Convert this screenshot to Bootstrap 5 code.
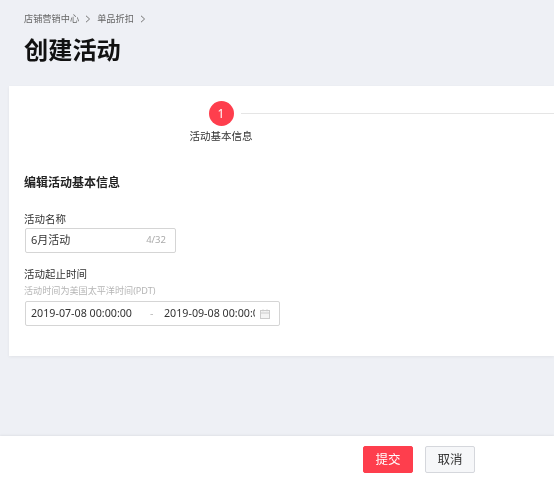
<!DOCTYPE html>
<html lang="zh">
<head>
<meta charset="utf-8">
<title>创建活动</title>
<link href="https://cdn.jsdelivr.net/npm/bootstrap@5.3.0/dist/css/bootstrap.min.css" rel="stylesheet">
<style>
html,body{height:477px;overflow:hidden;}
body{background:#eef0f5;font-family:"Noto Sans","Noto Sans CJK SC",sans-serif;color:#333;font-size:11px;filter:blur(.4px);}
.shell{height:477px;}
.crumbs{padding:4px 0 0 24px;height:33px;font-size:9.2px;line-height:14px;color:#666;gap:6px;}
.crumbs svg{width:6px;height:8px;}
.page-title{font-size:24.2px;font-weight:700;line-height:34px;margin:0 0 0 24px;color:#111;height:53px;}
.panel{margin-left:9px;height:270px;background:#fff;box-shadow:0 1px 3px rgba(0,0,0,.06);padding:15px 0 0 15px;}
.stepper{width:530px;height:42px;}
.step-col{width:68px;margin-left:163px;}
.step-dot{width:25px;height:25px;border-radius:50%;background:#fe3e4d;color:#fff;font-size:12px;line-height:25px;text-align:center;}
.step-name{font-size:10.5px;line-height:16px;margin-top:2px;color:#333;white-space:nowrap;}
.step-line{height:1px;flex:1;background:#e5e5e5;margin-top:12px;margin-left:-14px;}
.sec-title{font-size:12px;font-weight:700;line-height:17px;margin-top:31px;color:#222;}
.lbl{font-size:10.5px;line-height:16px;color:#333;}
.name-lbl{margin-top:20px;}
.field{height:25px;margin-left:1px;border:1px solid #d5d5d5;border-radius:2px;background:#fff;font-size:11px;color:#333;}
.name-field{width:151px;margin-top:1px;padding:0 9px 0 5px;}
.count{color:#aaa;font-size:9.5px;}
.time-lbl{margin-top:13px;}
.hint{font-size:9.1px;line-height:13px;color:#b5b5b5;margin-top:2px;}
.date-field{width:255px;margin-top:4px;padding:0 9px 0 5px;font-size:10.7px;}
.d1{width:119px;white-space:nowrap;}
.sep{width:14px;color:#bbb;}
.d2{width:91px;white-space:nowrap;overflow:hidden;}
.date-field svg{width:10px;height:10px;margin-left:5px;}
.spacer{height:80px;}
.foot{height:41px;background:#fff;box-shadow:0 -1px 2px rgba(0,0,0,.06);}
.act{width:50px;height:27px;border-radius:2px;font-size:12.5px;line-height:25px;padding:0;}
.act-go{background:#fe3e4d;border:1px solid #fe3e4d;color:#fff;}
.act-go:hover{background:#fe3e4d;color:#fff;}
.act-no{background:#f6f7f9;border:1px solid #d5d7dc;color:#333;}
.foot-bar{height:41px;padding:10px 79px 0 0;gap:12px;}
</style>
</head>
<body>
<div class="shell">
  <div class="crumbs d-flex align-items-center">
    <span>店铺营销中心</span>
    <svg viewBox="0 0 6 8"><path d="M1 .8 4.6 4 1 7.2" fill="none" stroke="#777" stroke-width="1"/></svg>
    <span>单品折扣</span>
    <svg viewBox="0 0 6 8"><path d="M1 .8 4.6 4 1 7.2" fill="none" stroke="#777" stroke-width="1"/></svg>
  </div>
  <h1 class="page-title">创建活动</h1>
  <div class="panel">
    <div class="stepper d-flex">
      <div class="step-col d-flex flex-column align-items-center">
        <div class="step-dot">1</div>
        <div class="step-name">活动基本信息</div>
      </div>
      <div class="step-line"></div>
    </div>
    <div class="sec-title">编辑活动基本信息</div>
    <div class="lbl name-lbl">活动名称</div>
    <div class="field name-field d-flex align-items-center justify-content-between">
      <span>6月活动</span><span class="count">4/32</span>
    </div>
    <div class="lbl time-lbl">活动起止时间</div>
    <div class="hint">活动时间为美国太平洋时间(PDT)</div>
    <div class="field date-field d-flex align-items-center">
      <span class="d1">2019-07-08 00:00:00</span>
      <span class="sep">-</span>
      <span class="d2">2019-09-08 00:00:00</span>
      <svg viewBox="0 0 10 10"><rect x=".5" y="1.5" width="9" height="8" fill="#f4f4f4" stroke="#ccc"/><path d="M.5 4h9M3 .3v2M7 .3v2" stroke="#ccc" fill="none"/></svg>
    </div>
  </div>
  <div class="spacer"></div>
  <div class="foot">
    <div class="foot-bar d-flex justify-content-end">
      <button type="button" class="btn act act-go">提交</button>
      <button type="button" class="btn act act-no">取消</button>
    </div>
  </div>
</div>
<script src="https://cdn.jsdelivr.net/npm/bootstrap@5.3.0/dist/js/bootstrap.bundle.min.js"></script>
</body>
</html>
